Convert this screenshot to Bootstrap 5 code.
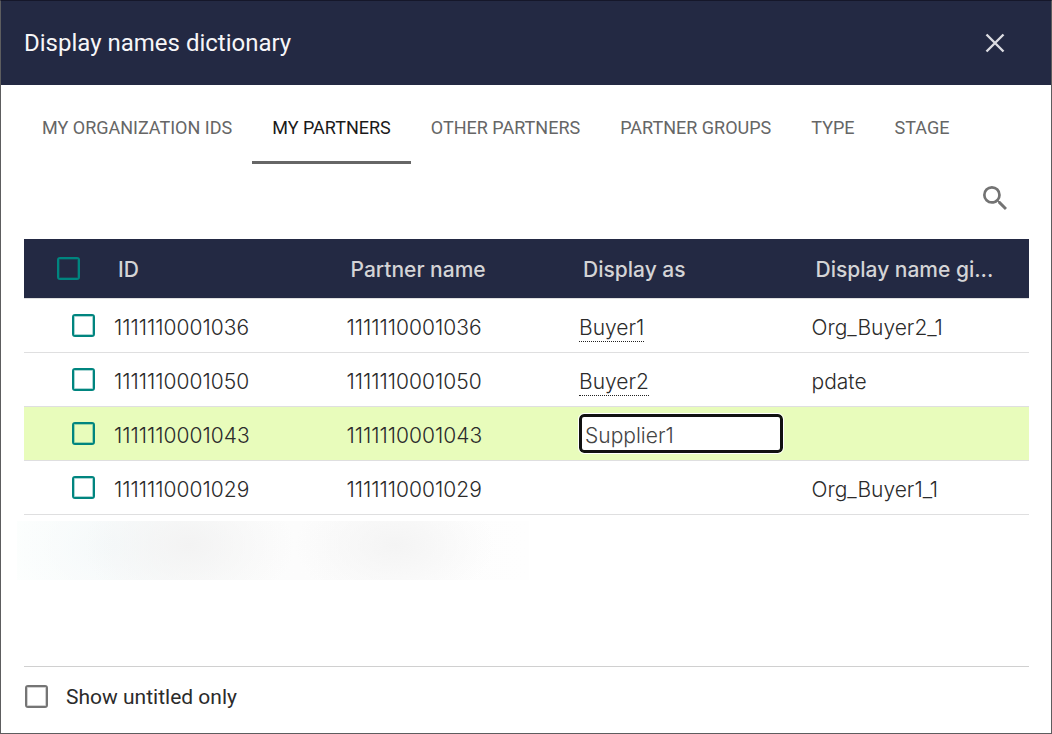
<!DOCTYPE html>
<html lang="en">
<head>
<meta charset="utf-8">
<meta name="viewport" content="width=device-width, initial-scale=1">
<title>Display names dictionary</title>
<link href="https://cdn.jsdelivr.net/npm/bootstrap@5.3.0/dist/css/bootstrap.min.css" rel="stylesheet">
<style>
  :root { --navy: #232943; --teal: #00857f; --rule: #dfdfe0; }
  body { font-family: Roboto, sans-serif; color: #2b2b2b; background: #fff; }
  .dialog-frame { border: 1px solid #5d5d5f; border-top-color: #15172a; }
  .dialog-head { background: var(--navy); height: 84px; padding: 0 36px 0 23px; }
  .dialog-title { font-size: 24px; line-height: 32px; font-weight: 400; color: #f6f6f8; }
  .icon-btn { width: 40px; height: 40px; }
  .dialog-tabs { padding: 0 21px; }
  .dialog-tabs .nav-link { height: 79px; padding: 10px 20px 0; border-bottom: 3px solid transparent; border-radius: 0; font-size: 18px; line-height: 24px; color: #666; }
  .dialog-tabs .nav-link.active { color: #1a1a1a; border-bottom-color: #666; background: none; }
  .search-row { height: 75px; padding: 0 36px 8px; }
  .table-wrap { padding: 0 22px 0 23px; }
  .names { table-layout: fixed; font-family: Inter, sans-serif; font-size: 21px; line-height: 28px; }
  .names col.pick { width: 75px; }
  .names th, .names td { border-bottom: 1px solid var(--rule); vertical-align: middle; padding: 0 15px; white-space: nowrap; }
  .names th { height: 59px; background: var(--navy); color: #d4d4d6; font-weight: 500; padding: 3px 19px 0; border-bottom-color: var(--rule); }
  .names td { height: 54px; font-weight: 300; padding-top: 5px; }
  .names th.pick-cell { padding: 0 0 0 33px; }
  .names td.pick-cell { padding: 0 0 0 48px; }
  .names tr.editing td { background: #e8fcbb; }
  .box { appearance: none; display: block; width: 23px; height: 23px; margin: 0; border: 2px solid var(--teal); border-radius: 3px; background: transparent; flex: none; box-shadow: inset 0 0 0 1px #00857f55; }
  .box:checked { background: var(--teal); }
  .box-grey { border-color: #757575; box-shadow: inset 0 0 0 1px #75757555; }
  .editable { color: inherit; text-decoration: none; border-bottom: 1px dotted #222; display: inline-block; line-height: 27px; }
  .name-input { display: block; width: 204px; height: 39px; padding: 4px 3px 0; border: 3px solid #111; border-radius: 5px; outline: 1px solid #fff; background: #fff; color: #444; font-weight: 300; }
  .names td.input-cell { padding-top: 0; }
  .smudge { width: 512px; max-width: 100%; height: 59px; margin: 6px 0 0 16px;
    background: radial-gradient(ellipse 105px 70px at 172px 24px, #f3f3f3, rgba(243,243,243,0)),
      radial-gradient(ellipse 100px 60px at 378px 24px, #f4f4f4, rgba(244,244,244,0)),
      radial-gradient(ellipse 115px 85px at 95px 24px, #f5f9fa, rgba(245,249,250,0)), linear-gradient(90deg, #fdfffe, #fcfcfc 55%, #fefefe); }
  .dialog-foot { margin: 0 22px 0 23px; height: 67px; padding: 0 1px 7px; border-top: 1px solid #d0d0d0; gap: 18px; font-size: 21px; line-height: 28px; }
</style>
</head>
<body>
<main class="dialog-frame min-vh-100 d-flex flex-column">
  <header class="dialog-head d-flex align-items-center justify-content-between">
    <h1 class="dialog-title m-0">Display names dictionary</h1>
    <button type="button" class="icon-btn btn p-0 border-0 d-flex align-items-center justify-content-center" aria-label="Close">
      <svg width="20" height="20" viewBox="0 0 20 20" fill="none" stroke="#dcdce2" stroke-width="2.4"><path d="M1.5 1.5 18.5 18.5M18.5 1.5 1.5 18.5"/></svg>
    </button>
  </header>

  <ul class="dialog-tabs nav">
    <li class="nav-item"><a class="nav-link d-flex align-items-center" href="#">MY ORGANIZATION IDS</a></li>
    <li class="nav-item"><a class="nav-link active d-flex align-items-center" aria-current="page" href="#">MY PARTNERS</a></li>
    <li class="nav-item"><a class="nav-link d-flex align-items-center" href="#">OTHER PARTNERS</a></li>
    <li class="nav-item"><a class="nav-link d-flex align-items-center" href="#">PARTNER GROUPS</a></li>
    <li class="nav-item"><a class="nav-link d-flex align-items-center" href="#">TYPE</a></li>
    <li class="nav-item"><a class="nav-link d-flex align-items-center" href="#">STAGE</a></li>
  </ul>

  <div class="search-row d-flex align-items-center justify-content-end">
    <button type="button" class="icon-btn btn p-0 border-0 d-flex align-items-center justify-content-center" aria-label="Search">
      <svg width="24" height="24" viewBox="3 3 17.5 17.5" fill="#737373"><path d="M15.5 14h-.79l-.28-.27A6.47 6.47 0 0 0 16 9.5 6.5 6.5 0 1 0 9.5 16c1.61 0 3.09-.59 4.23-1.57l.27.28v.79l5 4.99L20.49 19l-4.99-5zm-6 0C7.01 14 5 11.99 5 9.5S7.01 5 9.5 5 14 7.01 14 9.5 11.99 14 9.5 14z"/></svg>
    </button>
  </div>

  <div class="table-wrap">
    <table class="names w-100">
      <colgroup><col class="pick"><col><col><col><col></colgroup>
      <thead>
        <tr>
          <th class="pick-cell"><input class="box" type="checkbox" aria-label="Select all"></th>
          <th scope="col">ID</th>
          <th scope="col">Partner name</th>
          <th scope="col">Display as</th>
          <th scope="col">Display name gi...</th>
        </tr>
      </thead>
      <tbody>
        <tr>
          <td class="pick-cell"><input class="box" type="checkbox" aria-label="Select 1111110001036"></td>
          <td>1111110001036</td><td>1111110001036</td>
          <td><a class="editable" href="#">Buyer1</a></td><td>Org_Buyer2_1</td>
        </tr>
        <tr>
          <td class="pick-cell"><input class="box" type="checkbox" aria-label="Select 1111110001050"></td>
          <td>1111110001050</td><td>1111110001050</td>
          <td><a class="editable" href="#">Buyer2</a></td><td>pdate</td>
        </tr>
        <tr class="editing">
          <td class="pick-cell"><input class="box" type="checkbox" aria-label="Select 1111110001043"></td>
          <td>1111110001043</td><td>1111110001043</td>
          <td class="input-cell"><input class="name-input" type="text" value="Supplier1" aria-label="Display as"></td><td></td>
        </tr>
        <tr>
          <td class="pick-cell"><input class="box" type="checkbox" aria-label="Select 1111110001029"></td>
          <td>1111110001029</td><td>1111110001029</td>
          <td></td><td>Org_Buyer1_1</td>
        </tr>
      </tbody>
    </table>
  </div>
  <div class="smudge" aria-hidden="true"></div>

  <footer class="dialog-foot d-flex align-items-center mt-auto">
    <input class="box box-grey" type="checkbox" id="untitled">
    <label for="untitled">Show untitled only</label>
  </footer>
</main>
<script src="https://cdn.jsdelivr.net/npm/bootstrap@5.3.0/dist/js/bootstrap.bundle.min.js"></script>
</body>
</html>
